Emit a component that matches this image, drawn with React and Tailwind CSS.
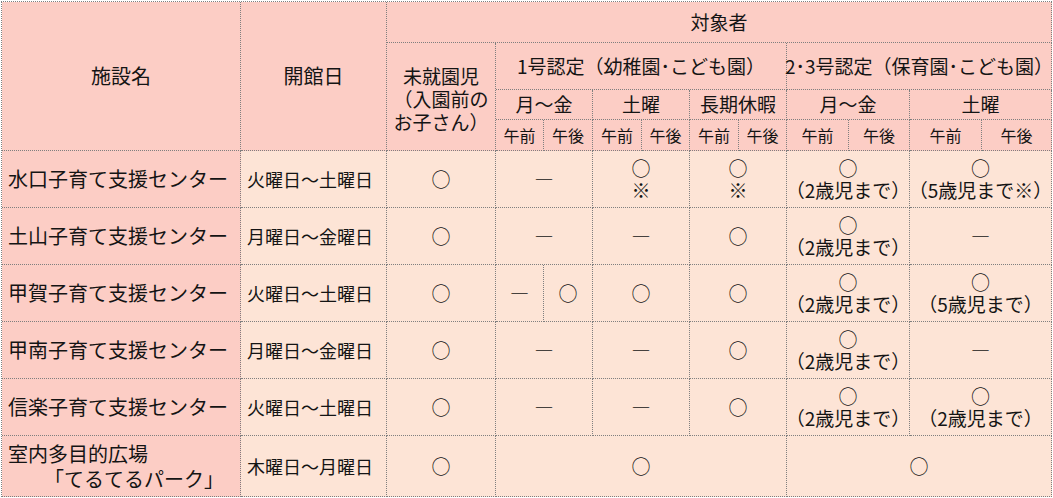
import React from "react";

const B = "border-r border-b border-dotted border-[#7f7f7f] flex items-center";
const H = `${B} bg-[#fccdc5] justify-center text-center`;
const D = `${B} bg-[#fde4d6] justify-center text-center`;
const N = `${B} bg-[#fccdc5] pl-[6px] text-[20px]`;
const DT = `${B} bg-[#fde4d6] pl-[6px] text-[18px]`;

const O = "○";
const L = "―";

function Two({ a, b }) {
  return (
    <div className="flex flex-col items-center leading-[22px] whitespace-nowrap">
      <span>{a}</span>
      <span>{b}</span>
    </div>
  );
}

export default function App() {
  return (
    <div className="w-[1053px] h-[498px] bg-white pt-[1px] pl-[1px]">
      <div className="grid grid-cols-[239px_146px_109px_48px_49px_49px_48px_49px_48px_62px_61px_72px_70px] grid-rows-[41px_47px_30px_31px_57px_57px_57px_57px_57px_61px] w-[1051px] border-l border-t border-dotted border-[#7f7f7f] font-['Noto_Sans_CJK_JP',sans-serif] text-[19px] text-[#141414]">
        {/* header */}
        <div className={`${H} row-span-4 text-[20px]`}>施設名</div>
        <div className={`${H} row-span-4 text-[20px]`}>開館日</div>
        <div className={`${H} col-span-11`}>対象者</div>
        <div className={`${H} row-span-3`}>
          <div className="flex flex-col items-center pt-[4px] leading-[23px]">
            <span>未就園児</span>
            <span>（入園前の</span>
            <span>お子さん）</span>
          </div>
        </div>
        <div className={`${H} col-span-6 whitespace-nowrap`}>1号認定（幼稚園･こども園）</div>
        <div className={`${H} col-span-4 whitespace-nowrap`}>2･3号認定（保育園･こども園）</div>
        <div className={`${H} col-span-2`}>月～金</div>
        <div className={`${H} col-span-2`}>土曜</div>
        <div className={`${H} col-span-2`}>長期休暇</div>
        <div className={`${H} col-span-2`}>月～金</div>
        <div className={`${H} col-span-2`}>土曜</div>
        {Array.from({ length: 10 }).map((_, i) => (
          <div key={i} className={`${H} text-[16px]`}>
            {i % 2 === 0 ? "午前" : "午後"}
          </div>
        ))}

        {/* 水口 */}
        <div className={N}>水口子育て支援センター</div>
        <div className={DT}>火曜日～土曜日</div>
        <div className={D}>{O}</div>
        <div className={`${D} col-span-2`}>{L}</div>
        <div className={`${D} col-span-2`}><Two a={O} b="※" /></div>
        <div className={`${D} col-span-2`}><Two a={O} b="※" /></div>
        <div className={`${D} col-span-2`}><Two a={O} b="（2歳児まで）" /></div>
        <div className={`${D} col-span-2`}><Two a={O} b="（5歳児まで※）" /></div>

        {/* 土山 */}
        <div className={N}>土山子育て支援センター</div>
        <div className={DT}>月曜日～金曜日</div>
        <div className={D}>{O}</div>
        <div className={`${D} col-span-2`}>{L}</div>
        <div className={`${D} col-span-2`}>{L}</div>
        <div className={`${D} col-span-2`}>{O}</div>
        <div className={`${D} col-span-2`}><Two a={O} b="（2歳児まで）" /></div>
        <div className={`${D} col-span-2`}>{L}</div>

        {/* 甲賀 */}
        <div className={N}>甲賀子育て支援センター</div>
        <div className={DT}>火曜日～土曜日</div>
        <div className={D}>{O}</div>
        <div className={D}>{L}</div>
        <div className={D}>{O}</div>
        <div className={`${D} col-span-2`}>{O}</div>
        <div className={`${D} col-span-2`}>{O}</div>
        <div className={`${D} col-span-2`}><Two a={O} b="（2歳児まで）" /></div>
        <div className={`${D} col-span-2`}><Two a={O} b="（5歳児まで）" /></div>

        {/* 甲南 */}
        <div className={N}>甲南子育て支援センター</div>
        <div className={DT}>月曜日～金曜日</div>
        <div className={D}>{O}</div>
        <div className={`${D} col-span-2`}>{L}</div>
        <div className={`${D} col-span-2`}>{L}</div>
        <div className={`${D} col-span-2`}>{O}</div>
        <div className={`${D} col-span-2`}><Two a={O} b="（2歳児まで）" /></div>
        <div className={`${D} col-span-2`}>{L}</div>

        {/* 信楽 */}
        <div className={N}>信楽子育て支援センター</div>
        <div className={DT}>火曜日～土曜日</div>
        <div className={D}>{O}</div>
        <div className={`${D} col-span-2`}>{L}</div>
        <div className={`${D} col-span-2`}>{L}</div>
        <div className={`${D} col-span-2`}>{O}</div>
        <div className={`${D} col-span-2`}><Two a={O} b="（2歳児まで）" /></div>
        <div className={`${D} col-span-2`}><Two a={O} b="（2歳児まで）" /></div>

        {/* てるてるパーク */}
        <div className={`${N} !items-stretch`}>
          <div className="flex flex-col justify-center w-full pr-[16px] leading-[25px]">
            <span>室内多目的広場</span>
            <span className="self-end">「てるてるパーク」</span>
          </div>
        </div>
        <div className={DT}>木曜日～月曜日</div>
        <div className={D}>{O}</div>
        <div className={`${D} col-span-6`}>{O}</div>
        <div className={`${D} col-span-4`}>{O}</div>
      </div>
    </div>
  );
}
